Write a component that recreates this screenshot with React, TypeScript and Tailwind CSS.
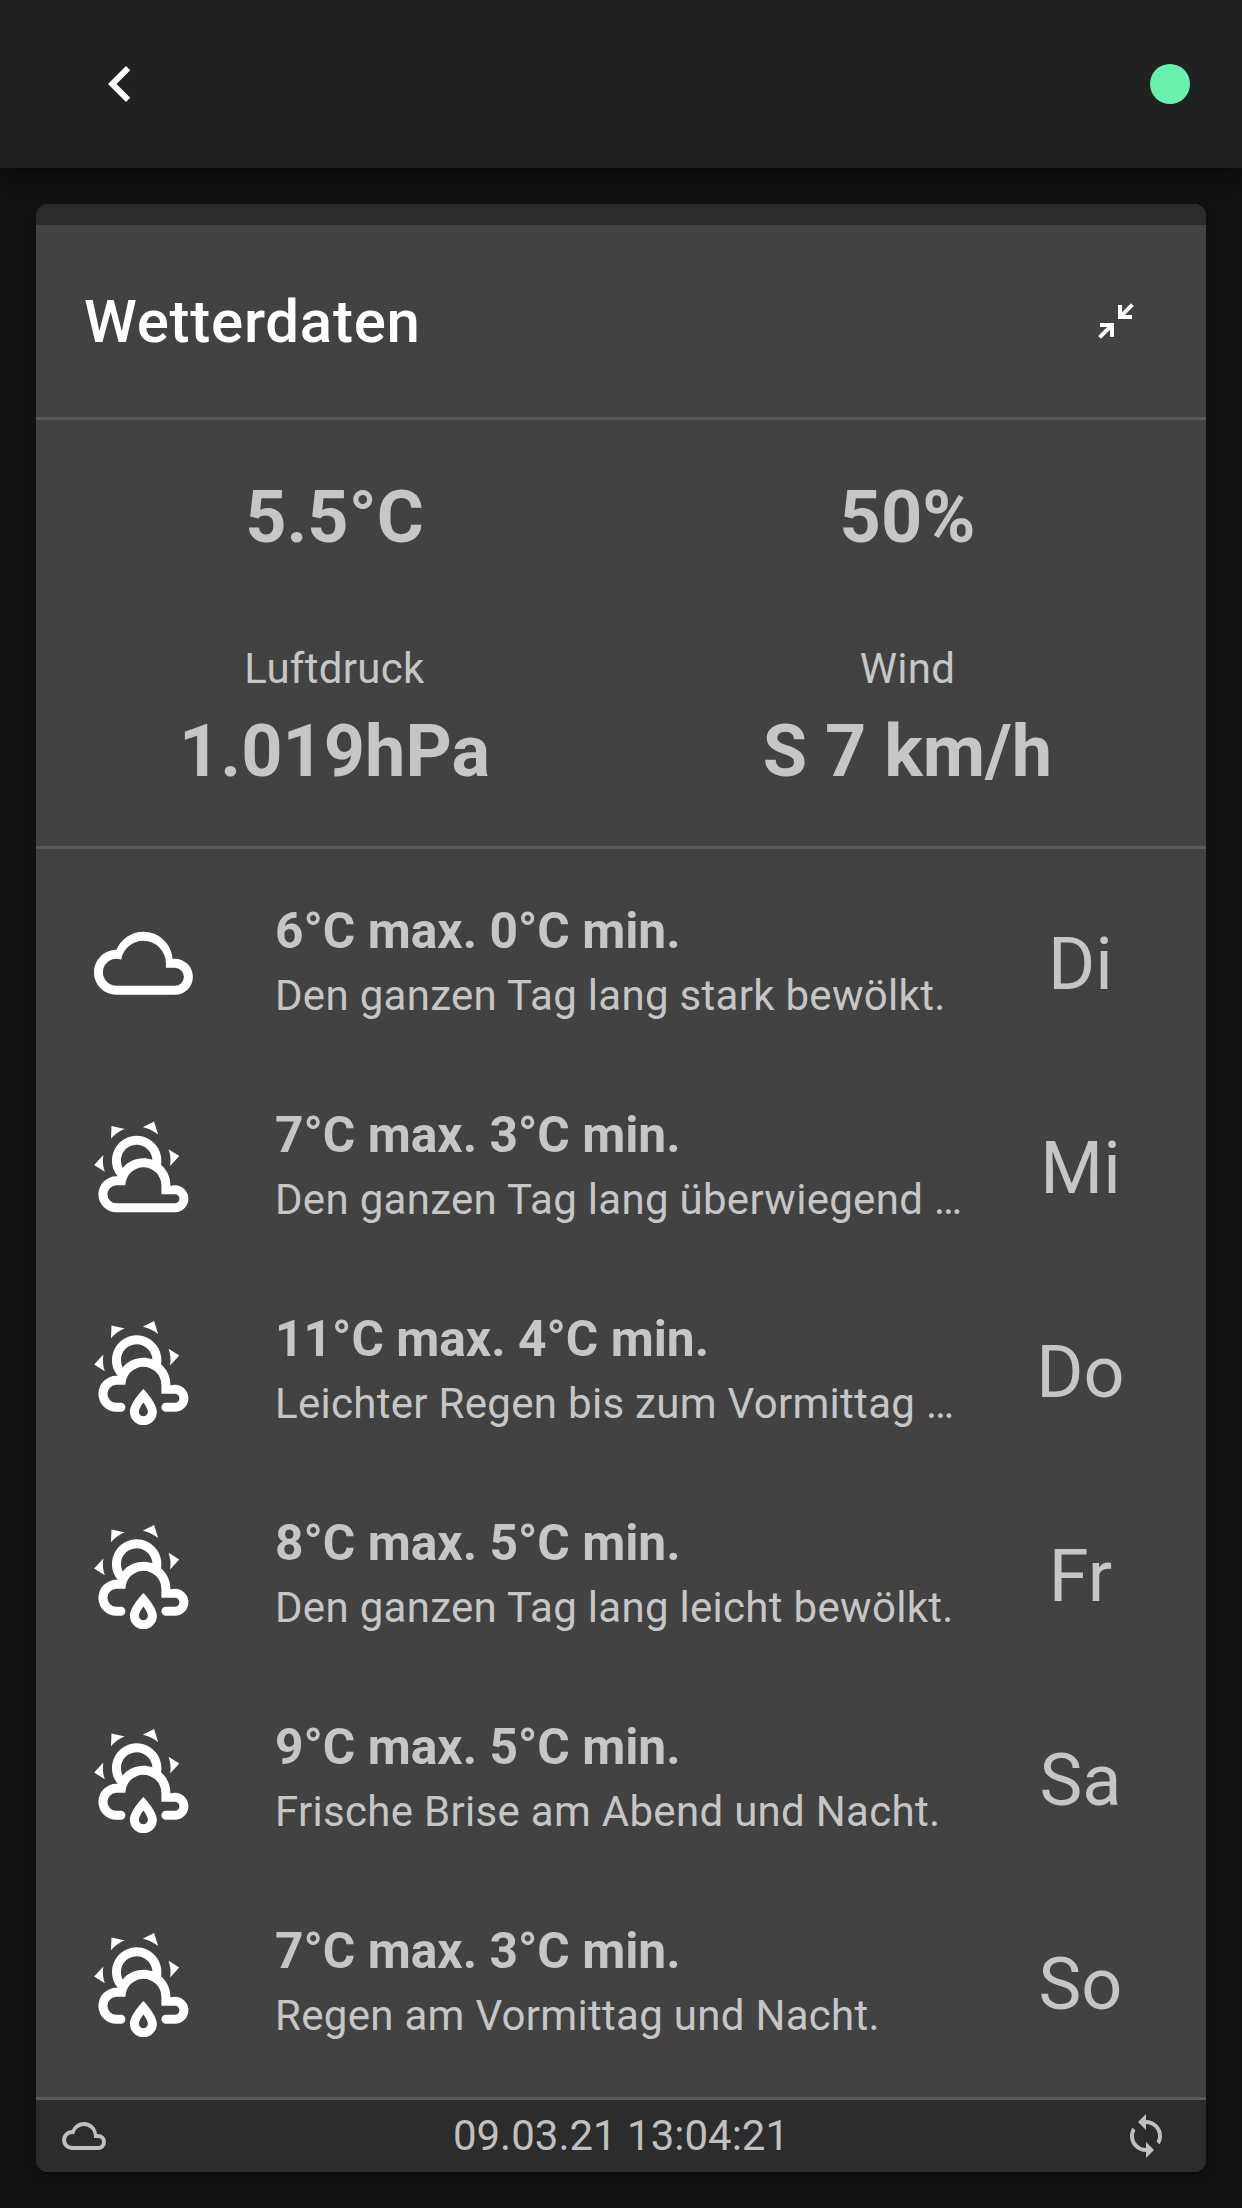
import React from "react";

const CLOUDY =
  "M6,19A5,5 0 0,1 1,14A5,5 0 0,1 6,9C7,6.65 9.3,5 12,5C15.43,5 18.24,7.66 18.5,11.03L19,11A4,4 0 0,1 23,15A4,4 0 0,1 19,19H6M19,13H17V12A5,5 0 0,0 12,7C9.5,7 7.45,8.82 7.06,11.19C6.73,11.07 6.37,11 6,11A3,3 0 0,0 3,14A3,3 0 0,0 6,17H19A2,2 0 0,0 21,15A2,2 0 0,0 19,13Z";

const PARTLY_CLOUDY =
  "M12.74,5.47C15.1,6.5 16.35,9.03 15.92,11.46C17.19,12.56 18,14.19 18,16V16.17C18.31,16.06 18.65,16 19,16A3,3 0 0,1 22,19A3,3 0 0,1 19,22H6A4,4 0 0,1 2,18A4,4 0 0,1 6,14H6.27C5,12.45 4.6,10.24 5.5,8.26C6.72,5.5 9.97,4.24 12.74,5.47M11.93,7.3C10.16,6.5 8.09,7.31 7.31,9.07C6.85,10.09 6.93,11.22 7.41,12.13C8.5,10.83 10.16,10 12,10C12.7,10 13.38,10.12 14,10.34C13.94,9.06 13.18,7.86 11.93,7.3M13.55,3.64C13,3.4 12.45,3.23 11.88,3.12L14.37,1.82L15.27,4.71C14.76,4.29 14.19,3.93 13.55,3.64M6.09,4.44C5.6,4.79 5.17,5.19 4.8,5.63L4.91,2.82L7.87,3.5C7.25,3.71 6.65,4.03 6.09,4.44M18,9.71C17.91,9.12 17.78,8.55 17.59,8L19.97,9.5L17.92,11.73C18.03,11.08 18.05,10.4 18,9.71M3.04,11.3C3.11,11.9 3.24,12.47 3.43,13L1.06,11.5L3.1,9.28C3,9.93 2.97,10.61 3.04,11.3M19,18H16V16A4,4 0 0,0 12,12A4,4 0 0,0 8,16H6A2,2 0 0,0 4,18A2,2 0 0,0 6,20H19A1,1 0 0,0 20,19A1,1 0 0,0 19,18Z";

const PARTLY_RAINY =
  "M12.74,4.47C15.1,5.5 16.35,8.03 15.92,10.46C17.19,11.56 18,13.19 18,15V15.17C18.31,15.06 18.65,15 19,15A3,3 0 0,1 22,18A3,3 0 0,1 19,21H17A1,1 0 0,1 16,20A1,1 0 0,1 17,19H19A1,1 0 0,0 20,18A1,1 0 0,0 19,17H16V15A4,4 0 0,0 12,11A4,4 0 0,0 8,15H6A2,2 0 0,0 4,17A2,2 0 0,0 6,19H7A1,1 0 0,1 8,20A1,1 0 0,1 7,21H6A4,4 0 0,1 2,17A4,4 0 0,1 6,13H6.27C5,11.45 4.6,9.24 5.5,7.26C6.72,4.5 9.97,3.24 12.74,4.47M11.93,6.3C10.16,5.5 8.09,6.31 7.31,8.07C6.85,9.09 6.93,10.22 7.41,11.13C8.5,9.83 10.16,9 12,9C12.7,9 13.38,9.12 14,9.34C13.94,8.06 13.18,6.86 11.93,6.3M13.55,2.64C13,2.4 12.45,2.23 11.88,2.12L14.37,0.82L15.27,3.71C14.76,3.29 14.19,2.93 13.55,2.64M6.09,3.44C5.6,3.79 5.17,4.19 4.8,4.63L4.91,1.82L7.87,2.5C7.25,2.71 6.65,3.03 6.09,3.44M18,8.71C17.91,8.12 17.78,7.55 17.59,7L19.97,8.5L17.92,10.73C18.03,10.08 18.05,9.4 18,8.71M3.04,10.3C3.11,10.9 3.24,11.47 3.43,12L1.06,10.5L3.1,8.28C3,8.93 2.97,9.61 3.04,10.3M12,15.91C12,15.91 15,19 15,21A3,3 0 0,1 12,24A3,3 0 0,1 9,21C9,19 12,15.91 12,15.91M12,18.91C12,18.91 11,20.17 11,21A1,1 0 0,0 12,22A1,1 0 0,0 13,21C13,20.17 12,18.91 12,18.91Z";

const CHEVRON_LEFT = "M15.41,16.58L10.83,12L15.41,7.41L14,6L8,12L14,18L15.41,16.58Z";

const COLLAPSE =
  "M19.5,3.09L15,7.59V4H13V11H20V9H16.41L20.91,4.5L19.5,3.09M4,13V15H7.59L3.09,19.5L4.5,20.91L9,16.41V20H11V13H4Z";

const SYNC =
  "M12,18A6,6 0 0,1 6,12C6,11 6.25,10.03 6.7,9.2L5.24,7.74C4.46,8.97 4,10.43 4,12A8,8 0 0,0 12,20V23L16,19L12,15M12,4V1L8,5L12,9V6A6,6 0 0,1 18,12C18,13 17.75,13.97 17.3,14.8L18.76,16.26C19.54,15.03 20,13.57 20,12A8,8 0 0,0 12,4Z";

function Icon({ path, className }: { path: string; className: string }) {
  return (
    <svg viewBox="0 0 24 24" fill="currentColor" className={className} aria-hidden="true">
      <path d={path} />
    </svg>
  );
}

const forecast = [
  { icon: CLOUDY, temp: "6°C max. 0°C min.", text: "Den ganzen Tag lang stark bewölkt.", day: "Di" },
  { icon: PARTLY_CLOUDY, temp: "7°C max. 3°C min.", text: "Den ganzen Tag lang überwiegend …", day: "Mi" },
  { icon: PARTLY_RAINY, temp: "11°C max. 4°C min.", text: "Leichter Regen bis zum Vormittag …", day: "Do" },
  { icon: PARTLY_RAINY, temp: "8°C max. 5°C min.", text: "Den ganzen Tag lang leicht bewölkt.", day: "Fr" },
  { icon: PARTLY_RAINY, temp: "9°C max. 5°C min.", text: "Frische Brise am Abend und Nacht.", day: "Sa" },
  { icon: PARTLY_RAINY, temp: "7°C max. 3°C min.", text: "Regen am Vormittag und Nacht.", day: "So" },
];

function Measure({ label, value }: { label?: string; value: string }) {
  return (
    <div className="flex flex-col items-center">
      {label && <div className="mb-1 text-[42px] leading-[63px] tracking-[0.3px]">{label}</div>}
      <div className="text-[72px] leading-[96px] font-bold">{value}</div>
    </div>
  );
}

export default function App() {
  return (
    <div className="flex h-[2208px] w-[1242px] flex-col overflow-hidden bg-[#121212] font-['Roboto',sans-serif] text-[#c6c6c6]">
      <header className="flex h-[168px] shrink-0 items-center justify-between bg-[#212121] pr-[52px] pl-[84px] shadow-[0_6px_12px_-3px_rgba(0,0,0,0.2),0_12px_15px_0_rgba(0,0,0,0.14),0_3px_30px_0_rgba(0,0,0,0.12)]">
        <button aria-label="Zurück" className="text-white">
          <Icon path={CHEVRON_LEFT} className="size-[72px]" />
        </button>
        <span className="size-10 rounded-full bg-[#69f0ae]" />
      </header>

      <main className="mx-9 mt-9 flex h-[1968px] shrink-0 flex-col overflow-hidden rounded-[12px] bg-[#424242] shadow-[0_9px_3px_-6px_rgba(0,0,0,0.2),0_6px_6px_0_rgba(0,0,0,0.14),0_3px_15px_0_rgba(0,0,0,0.12)]">
        <div className="h-[21px] shrink-0 bg-[#2c2c2c]" />
        <div className="flex h-[195px] shrink-0 items-center justify-between border-b-[3px] border-[#595959] pr-[66px] pl-12 text-white">
          <h1 className="pt-px text-[60px] leading-[96px] font-medium tracking-[0.75px]">Wetterdaten</h1>
          <button aria-label="Verkleinern">
            <Icon path={COLLAPSE} className="size-12" />
          </button>
        </div>

        <section className="grid h-[429px] shrink-0 grid-cols-2 content-start gap-y-[71px] border-b-[3px] border-[#595959] px-3 pt-[50px]">
          <Measure value="5.5°C" />
          <Measure value="50%" />
          <Measure label="Luftdruck" value="1.019hPa" />
          <Measure label="Wind" value="S 7 km/h" />
        </section>

        <ul className="flex h-[1251px] shrink-0 flex-col border-b-[3px] border-[#595959] py-3">
          {forecast.map((f, i) => (
            <li key={i} className="flex h-[204px] items-center pl-[53px]">
              <Icon path={f.icon} className="size-[108px] shrink-0 translate-x-[0.4px] translate-y-[0.3px] text-white" />
              <div className="ml-[78px] flex w-[690px] shrink-0 flex-col pt-px">
                <div className="mb-0.5 text-[49.7px] leading-[62px] font-bold whitespace-nowrap">{f.temp}</div>
                <div className="text-[42px] leading-[63px] tracking-[0.3px] whitespace-nowrap">{f.text}</div>
              </div>
              <div className="w-[231px] pt-[3px] text-center text-[72px] leading-[96px]">{f.day}</div>
            </li>
          ))}
        </ul>

        <footer className="flex h-[72px] shrink-0 items-center bg-[#2c2c2c] pr-9 pl-6 text-[#c0c0c0]">
          <Icon path={CLOUDY} className="size-12" />
          <span className="flex-1 pb-px pl-3 text-center text-[42px] leading-[63px]">09.03.21 13:04:21</span>
          <Icon path={SYNC} className="size-12" />
        </footer>
      </main>
    </div>
  );
}
